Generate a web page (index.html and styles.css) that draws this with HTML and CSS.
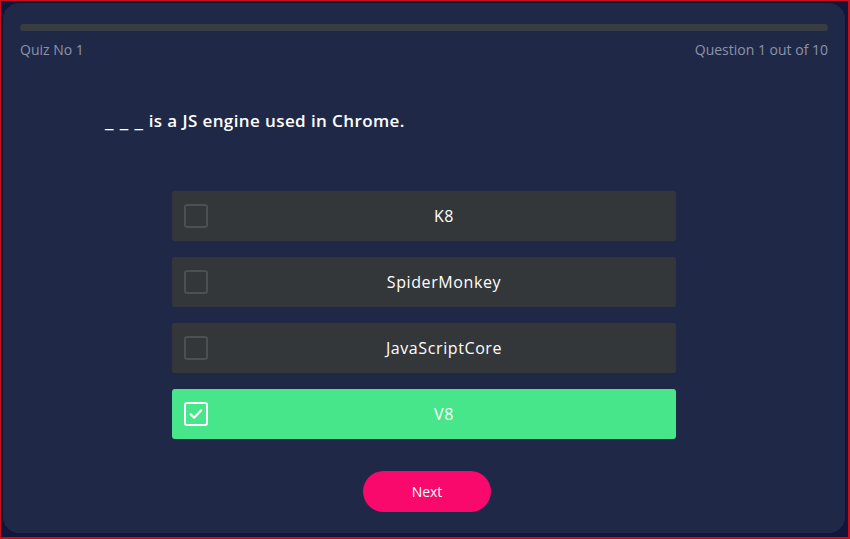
FILE: index.html
```html
<!DOCTYPE html>
<html lang="en">
<head>
<meta charset="utf-8">
<title>Quiz</title>
<link rel="stylesheet" href="styles.css">
</head>
<body>
<div class="frame">
  <main class="card">
    <div class="progress"><div class="progress-fill"></div></div>
    <div class="meta">
      <span>Quiz No 1</span>
      <span>Question 1 out of 10</span>
    </div>
    <h1 class="question"><span class="blank">_ _ _</span> is a JS engine used in Chrome.</h1>
    <ul class="options">
      <li class="option"><span class="box"></span><span class="label">K8</span></li>
      <li class="option"><span class="box"></span><span class="label">SpiderMonkey</span></li>
      <li class="option"><span class="box"></span><span class="label">JavaScriptCore</span></li>
      <li class="option selected"><span class="box"><svg viewBox="0 0 24 24" width="18" height="18"><path d="M5 12.5l4.5 4.5L19 7" fill="none" stroke="#fff" stroke-width="3" stroke-linecap="round" stroke-linejoin="round"/></svg></span><span class="label">V8</span></li>
    </ul>
    <div class="actions"><button class="next">Next</button></div>
  </main>
</div>
</body>
</html>
```
FILE: styles.css
```css
* { box-sizing: border-box; }
html, body { margin: 0; padding: 0; }
body {
  width: 850px;
  height: 539px;
  font-family: "Open Sans", "Liberation Sans", sans-serif;
  background: #c40d1a;
}
.frame {
  width: 850px;
  height: 539px;
  border: 1px solid #c8101c;
  border-right-width: 2px;
  border-bottom-width: 2px;
  background: #13153a;
  padding: 2px 3px 4px 2px;
}
.card {
  height: 100%;
  background: #1f2947;
  border-radius: 16px;
  padding: 21px 17px 0 17px;
  display: flex;
  flex-direction: column;
}
.progress {
  height: 7px;
  border-radius: 4px;
  background: #373d40;
}
.meta {
  display: flex;
  justify-content: space-between;
  margin-top: 9px;
  font-size: 14px;
  color: #8c93a8;
}
.question {
  margin: 50px 0 0 85px;
  font-size: 17px;
  line-height: 23px;
  font-weight: 600;
  color: #ffffff;
  letter-spacing: 0.4px;
}
.blank {
  font-size: 20px;
  line-height: 0;
  letter-spacing: 0;
  word-spacing: 1px;
  margin-right: 1px;
}
.options {
  list-style: none;
  margin: 59px 0 0 152px;
  padding: 0;
  width: 504px;
  display: flex;
  flex-direction: column;
  gap: 16px;
}
.option {
  height: 50px;
  background: #343739;
  border-radius: 3px;
  display: flex;
  align-items: center;
  padding-left: 12px;
  color: #ffffff;
  font-size: 16px;
  letter-spacing: 0.6px;
}
.box {
  width: 24px;
  height: 24px;
  border: 2px solid #4c5053;
  border-radius: 3px;
  display: flex;
  align-items: center;
  justify-content: center;
}
.label {
  flex: 1;
  text-align: center;
  padding-left: 4px;
}
.option.selected { background: #47e68a; }
.option.selected .box { border-color: #ffffff; }
.actions {
  margin-top: 32px;
  display: flex;
  justify-content: center;
  padding-left: 6px;
}
.next {
  width: 128px;
  height: 41px;
  border: none;
  border-radius: 21px;
  background: #f8096b;
  color: #ffffff;
  font-family: inherit;
  font-size: 14px;
  font-weight: 500;
}
```
